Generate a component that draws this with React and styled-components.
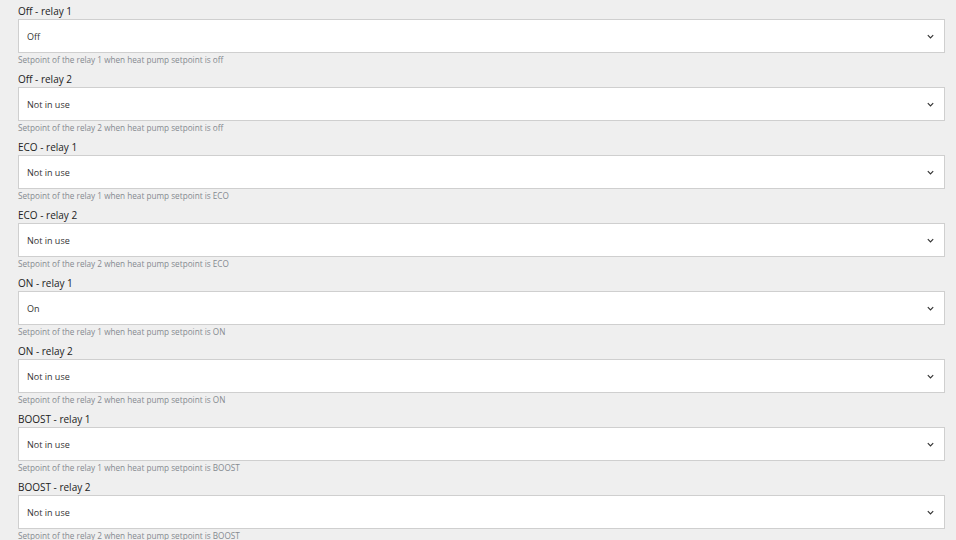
import styled, { createGlobalStyle } from "styled-components";

// style

const GlobalStyle = createGlobalStyle`
  html, body {
    margin: 0;
    padding: 0;
    background: #efefef;
    font-family: "Open Sans", "Noto Sans", sans-serif;
  }
`;

const Page = styled.div`
  display: flex;
  flex-direction: column;
  padding: 0 11px 0 18px;
`;

const Field = styled.div`
  display: flex;
  flex-direction: column;
  padding: 4px 0 2px;
`;

const Label = styled.label`
  font-size: 10px;
  line-height: 14px;
  color: #222;
  margin-bottom: 1px;
`;

const SelectBox = styled.div`
  display: flex;
  align-items: center;
  justify-content: space-between;
  box-sizing: border-box;
  height: 34px;
  padding: 0 8px;
  background: #fff;
  border: 1px solid #cfcfcf;
  font-size: 9px;
  color: #333;
`;

const Chevron = styled.svg`
  width: 9px;
  height: 9px;
  margin-right: 1px;
`;

const Help = styled.div`
  font-size: 8.2px;
  line-height: 13px;
  color: #858a8f;
`;

// data

const FIELDS = [
  { label: "Off - relay 1", value: "Off", help: "Setpoint of the relay 1 when heat pump setpoint is off" },
  { label: "Off - relay 2", value: "Not in use", help: "Setpoint of the relay 2 when heat pump setpoint is off" },
  { label: "ECO - relay 1", value: "Not in use", help: "Setpoint of the relay 1 when heat pump setpoint is ECO" },
  { label: "ECO - relay 2", value: "Not in use", help: "Setpoint of the relay 2 when heat pump setpoint is ECO" },
  { label: "ON - relay 1", value: "On", help: "Setpoint of the relay 1 when heat pump setpoint is ON" },
  { label: "ON - relay 2", value: "Not in use", help: "Setpoint of the relay 2 when heat pump setpoint is ON" },
  { label: "BOOST - relay 1", value: "Not in use", help: "Setpoint of the relay 1 when heat pump setpoint is BOOST" },
  { label: "BOOST - relay 2", value: "Not in use", help: "Setpoint of the relay 2 when heat pump setpoint is BOOST" },
];

// code

function App() {
  return (
    <>
      <GlobalStyle />
      <Page>
        {FIELDS.map((f) => (
          <Field key={f.label}>
            <Label>{f.label}</Label>
            <SelectBox>
              <span>{f.value}</span>
              <Chevron viewBox="0 0 10 10">
                <path d="M2 3.5 L5 6.5 L8 3.5" fill="none" stroke="#333" strokeWidth="1.3" />
              </Chevron>
            </SelectBox>
            <Help>{f.help}</Help>
          </Field>
        ))}
      </Page>
    </>
  );
}

export default App;
